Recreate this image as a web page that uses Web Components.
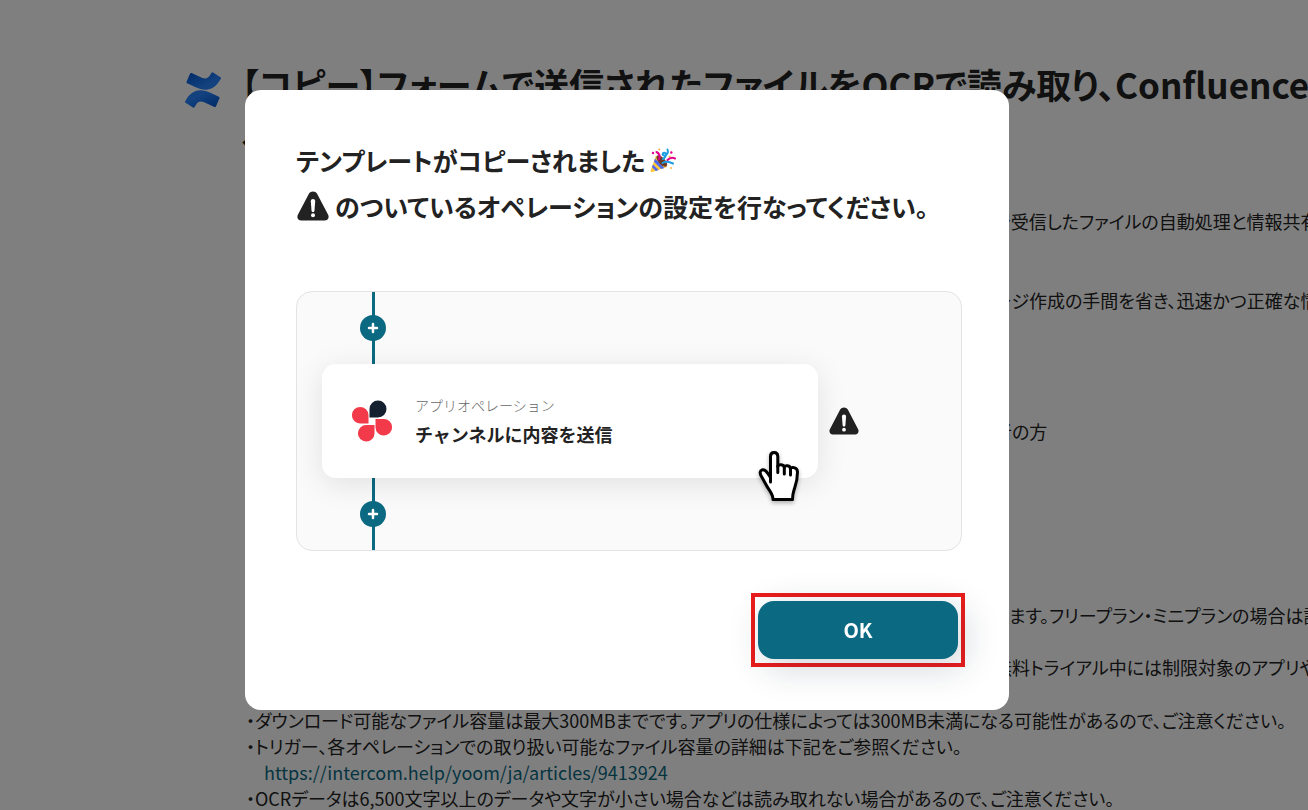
<!DOCTYPE html>
<html lang="ja">
<head>
<meta charset="utf-8">
<title>Yoom</title>
<style>
  body {
    margin: 0;
    height: 100vh;
    overflow: hidden;
    background: #fff;
    color: #222;
    font-family: "Noto Sans CJK JP", sans-serif;
    font-feature-settings: "palt";
  }
</style>
</head>
<body>
<template-page>
  <confluence-logo slot="logo"></confluence-logo>
  <span slot="title">【コピー】フォームで送信されたファイルをOCRで読み取り、Confluence<br>へページを作成する</span>
  <page-notes></page-notes>
</template-page>

<copy-modal>
  <span slot="first">テンプレートがコピーされました</span>
  <span slot="second">のついているオペレーションの設定を行なってください。</span>
  <flow-preview>
    <operation-card>
      <span slot="kind">アプリオペレーション</span>
      <span slot="name">チャンネルに内容を送信</span>
    </operation-card>
  </flow-preview>
  <ok-button slot="action">OK</ok-button>
</copy-modal>

<script>
class BaseElement extends HTMLElement {
  constructor() {
    super();
    this.attachShadow({ mode: "open" });
    this.shadowRoot.innerHTML = this.render();
  }
}

class ConfluenceLogo extends BaseElement {
  render() {
    return `<style>
      :host { display: block; flex: none; width: 36px; padding-top: 15px; }
      svg { display: block; width: 36px; height: 36px; }
    </style>
    <svg viewBox="0 0 24 24" aria-hidden="true">
      <defs>
        <linearGradient id="low" x1="1" y1="1" x2="0.2" y2="0.2">
          <stop offset="0" stop-color="#0052cc"/>
          <stop offset="0.8" stop-color="#2684ff"/>
        </linearGradient>
        <linearGradient id="high" x1="0" y1="0" x2="0.8" y2="0.8">
          <stop offset="0" stop-color="#0052cc"/>
          <stop offset="0.8" stop-color="#2684ff"/>
        </linearGradient>
      </defs>
      <path fill="url(#low)" d="M.87 18.257c-.248.382-.53.875-.763 1.245a.764.764 0 0 0 .255 1.04l4.965 3.054a.764.764 0 0 0 1.058-.26c.199-.332.454-.763.733-1.221 1.967-3.247 3.945-2.853 7.508-1.146l4.957 2.337a.764.764 0 0 0 1.028-.382l2.364-5.346a.764.764 0 0 0-.382-1 599.851 599.851 0 0 1-4.965-2.361C10.911 10.97 5.224 11.185.87 18.257z"/>
      <path fill="url(#high)" d="M23.131 5.743c.249-.405.531-.875.764-1.25a.764.764 0 0 0-.256-1.034L18.675.404a.764.764 0 0 0-1.058.26c-.195.335-.451.763-.734 1.225-1.966 3.246-3.945 2.85-7.508 1.146L4.437.694a.764.764 0 0 0-1.027.382L1.046 6.422a.764.764 0 0 0 .382 1c1.039.49 3.105 1.467 4.965 2.361 6.698 3.246 12.392 3.029 16.738-4.04z"/>
    </svg>`;
  }
}

class WarningIcon extends BaseElement {
  render() {
    return `<style>
      :host { display: inline-block; width: 34px; height: 30px; flex: none; }
      svg { display: block; width: 100%; height: 100%; }
    </style>
    <svg viewBox="0 0 32 30" role="img" aria-label="警告">
      <path fill="#222" d="M16 .5c1.700 0 3.200.9 4.100 2.300L31 23.500c1.500 2.800.100 6-3.100 6H4.100C.9 29.500-.5 26.300 1 23.500L11.900 2.800C12.800 1.400 14.300.5 16 .5z"/>
      <path fill="#fff" d="M13.800 10.200c0-1.300.9-2.200 2.200-2.200s2.200.9 2.200 2.200l-.7 9.300c-.1 1-.7 1.500-1.500 1.500s-1.400-.5-1.500-1.500z"/>
      <circle cx="16" cy="24.300" r="2" fill="#fff"/>
    </svg>`;
  }
}

class PartyIcon extends BaseElement {
  render() {
    return `<style>
      :host { display: inline-block; width: 26px; height: 26px; flex: none; }
      svg { display: block; width: 100%; height: 100%; }
    </style>
    <svg viewBox="0 0 26 26" aria-hidden="true">
      <path fill="#ffc83d" d="M6 8.500 17 20 2.500 25C1 25.500.3 24.500.7 23.200z"/>
      <path fill="#4f6bed" d="M5 11.500 14.500 21l-3.200 1.100L3.900 14.800zM2.900 17.500l5.700 5.600-2.800 1L2 20.200z"/>
      <ellipse cx="11.800" cy="14" rx="3.200" ry="7.200" transform="rotate(-42 11.800 14)" fill="#6d3b23"/>
      <path fill="none" stroke="#e3008c" stroke-width="2" stroke-linecap="round" d="M6.500 5c3 1.500 3.800 4 2.500 7.500M17.500 13c2-2 4.500-2.800 7.500-1.500"/>
      <path fill="none" stroke="#1b9de2" stroke-width="2" stroke-linecap="round" d="M17.500 2.500c1.200 3-.5 6-3.200 6-2.300 0-2-3 .2-2.800 2.500.3 1.800 4.500-1.500 6.300M12.500 16c3-1.800 6.500-1.500 10.500.5"/>
      <circle cx="3" cy="6" r="1.200" fill="#e3008c"/>
      <circle cx="21.300" cy="5.500" r="1.200" fill="#e3008c"/>
      <circle cx="9.300" cy="2.500" r="1" fill="#fcb53b"/>
      <circle cx="21" cy="21" r="1" fill="#fcb53b"/>
      <circle cx="19.800" cy="9.500" r="1" fill="#fcb53b"/>
    </svg>`;
  }
}

class TemplatePage extends BaseElement {
  render() {
    return `<style>
      :host { display: block; padding: 57px 0 0 185px; white-space: nowrap; }
      header { display: flex; gap: 20px; }
      h1 { margin: 0; font-size: 35px; line-height: 54px; font-weight: 700; }
      .body { padding: 43px 0 0 61px; }
    </style>
    <header><slot name="logo"></slot><h1><slot name="title"></slot></h1></header>
    <div class="body"><slot></slot></div>`;
  }
}

class PageNotes extends BaseElement {
  render() {
    return `<style>
      :host { display: block; font-size: 18px; line-height: 26px; }
      p { margin: 0; }
      .tail { display: grid; margin-left: 748px; }
      .intro { margin-bottom: 53px; }
      .detail { margin-bottom: 105px; }
      .target { margin-bottom: 158px; }
      .plan { margin-bottom: 26px; }
      .trial { margin-bottom: 27px; }
      .link { padding-left: 18px; }
      a { color: #0b6982; text-decoration: none; }
    </style>
    <div class="tail">
      <p class="intro">で受信したファイルの自動処理と情報共有</p>
      <p class="detail">ージ作成の手間を省き、迅速かつ正確な情</p>
      <p class="target">者の方</p>
      <p class="plan">ります。フリープラン・ミニプランの場合は設</p>
      <p class="trial">無料トライアル中には制限対象のアプリや</p>
    </div>
    <p>・ダウンロード可能なファイル容量は最大300MBまでです。アプリの仕様によっては300MB未満になる可能性があるので、ご注意ください。</p>
    <p>・トリガー、各オペレーションでの取り扱い可能なファイル容量の詳細は下記をご参照ください。</p>
    <p class="link"><a href="https://intercom.help/yoom/ja/articles/9413924">https://intercom.help/yoom/ja/articles/9413924</a></p>
    <p>・OCRデータは6,500文字以上のデータや文字が小さい場合などは読み取れない場合があるので、ご注意ください。</p>`;
  }
}

class CopyModal extends BaseElement {
  render() {
    return `<style>
      :host {
        position: fixed;
        inset: 0;
        display: flex;
        align-items: center;
        justify-content: center;
        padding: 0 54px 10px 0;
        background: rgba(0, 0, 0, 0.5);
      }
      .dialog {
        box-sizing: border-box;
        width: 764px;
        max-width: 100%;
        padding: 47px 47px 43px 51px;
        border-radius: 16px;
        background: #fff;
      }
      h2 { margin: 0 0 62px; font-size: 25px; line-height: 46px; font-weight: 700; }
      .line { display: flex; align-items: center; gap: 5px; white-space: nowrap; }
      footer { display: flex; justify-content: flex-end; margin: 42px -3px 0 0; }
    </style>
    <div class="dialog" role="dialog" aria-modal="true" aria-labelledby="heading">
      <h2 id="heading">
        <span class="line"><slot name="first"></slot><party-icon></party-icon></span>
        <span class="line"><warning-icon></warning-icon><slot name="second"></slot></span>
      </h2>
      <slot></slot>
      <footer><slot name="action"></slot></footer>
    </div>`;
  }
}

class FlowConnector extends BaseElement {
  render() {
    return `<style>
      :host {
        display: flex;
        align-items: center;
        justify-content: center;
        width: 26px;
        height: 72px;
        margin-left: 38px;
        background: linear-gradient(#0b6982, #0b6982) center / 3px 100% no-repeat;
      }
      button {
        display: grid;
        place-items: center;
        width: 26px;
        height: 26px;
        padding: 0;
        border: 0;
        border-radius: 50%;
        background: #0b6982;
      }
    </style>
    <button type="button" aria-label="オペレーションを追加">
      <svg width="12" height="12" viewBox="0 0 12 12"><path d="M6 2v8M2 6h8" stroke="#fff" stroke-width="2.500" stroke-linecap="round"/></svg>
    </button>`;
  }
}

class FlowPreview extends BaseElement {
  render() {
    return `<style>
      :host {
        display: block;
        padding-left: 25px;
        border: 1px solid #e3e3e3;
        border-radius: 16px;
        background: #fafafa;
      }
      .row { display: flex; align-items: center; gap: 11px; }
      warning-icon { width: 30px; height: 28px; }
    </style>
    <flow-connector></flow-connector>
    <div class="row"><slot></slot><warning-icon></warning-icon></div>
    <flow-connector></flow-connector>`;
  }
}

class OperationCard extends BaseElement {
  render() {
    return `<style>
      :host {
        position: relative;
        display: flex;
        align-items: center;
        gap: 21px;
        box-sizing: border-box;
        flex: 0 1 496px;
        height: 114px;
        padding-left: 28px;
        border-radius: 14px;
        background: #fff;
        box-shadow: 0 6px 30px rgba(0, 0, 0, 0.1);
      }
      .app { flex: none; }
      .text { display: grid; font-feature-settings: normal; }
      .kind { font-size: 14px; line-height: 26px; font-weight: 300; color: #666; }
      .name { font-size: 18px; line-height: 32px; font-weight: 700; }
      .pointer {
        position: absolute;
        right: 17px;
        bottom: -25px;
        filter: drop-shadow(0 2px 2px rgba(0, 0, 0, 0.3));
      }
    </style>
    <svg class="app" width="44" height="44" viewBox="0 0 44 44" aria-hidden="true">
      <path fill="#142030" d="M19.500 18.500v-8.500a8.500 8.500 0 1 1 8.500 8.500z"/>
      <path fill="#f23a4a" d="M18.500 24.500H10a8.300 8.300 0 1 1 8.500-8.500z"/>
      <path fill="#f23a4a" d="M25.500 20h8.200a8.300 8.300 0 1 1-8.200 8.500z"/>
      <path fill="#f23a4a" d="M24.500 26v8.500a8.300 8.300 0 1 1-8.300-8.500z"/>
    </svg>
    <div class="text">
      <div class="kind"><slot name="kind"></slot></div>
      <div class="name"><slot name="name"></slot></div>
    </div>
    <svg class="pointer" width="44" height="54" viewBox="0 0 44 54" aria-hidden="true">
      <path fill="#fff" stroke="#000" stroke-width="3" stroke-linejoin="round" d="M16 50.500c0-6-4-9-6.500-14L4.200 27c-1.600-3-1.200-5.200.6-6 2-.8 4.200.8 5.800 3.200l2.900 4.300V7.500c0-2.600 1.400-4 3.600-4s3.700 1.400 3.700 4v10c0-2.600 6.500-2.500 6.500 1 0-2.800 6.200-2.400 6.200 1.500 0-2.600 7-2 7 3 0 9-1.800 13-3.500 18-1 3-1.500 6-1.500 9.500z"/>
      <path fill="none" stroke="#000" stroke-width="3" stroke-linecap="round" d="M20.800 17v6.500M27.300 18v7M33.500 20v6M13.500 28v5"/>
    </svg>`;
  }
}

class OkButton extends BaseElement {
  render() {
    return `<style>
      :host { display: block; padding: 4px 3px; border: 4px solid #ea1c1c; }
      button {
        display: block;
        width: 200px;
        height: 58px;
        padding: 0;
        border: 0;
        border-radius: 16px;
        background: #0b6982;
        box-shadow: 6px 8px 36px rgba(20, 40, 60, 0.2);
        color: #fff;
        font: inherit;
        font-size: 20px;
        line-height: 30px;
        font-weight: 700;
      }
    </style>
    <button type="button"><slot></slot></button>`;
  }
}

customElements.define("confluence-logo", ConfluenceLogo);
customElements.define("warning-icon", WarningIcon);
customElements.define("party-icon", PartyIcon);
customElements.define("template-page", TemplatePage);
customElements.define("page-notes", PageNotes);
customElements.define("copy-modal", CopyModal);
customElements.define("flow-connector", FlowConnector);
customElements.define("flow-preview", FlowPreview);
customElements.define("operation-card", OperationCard);
customElements.define("ok-button", OkButton);
</script>
</body>
</html>
